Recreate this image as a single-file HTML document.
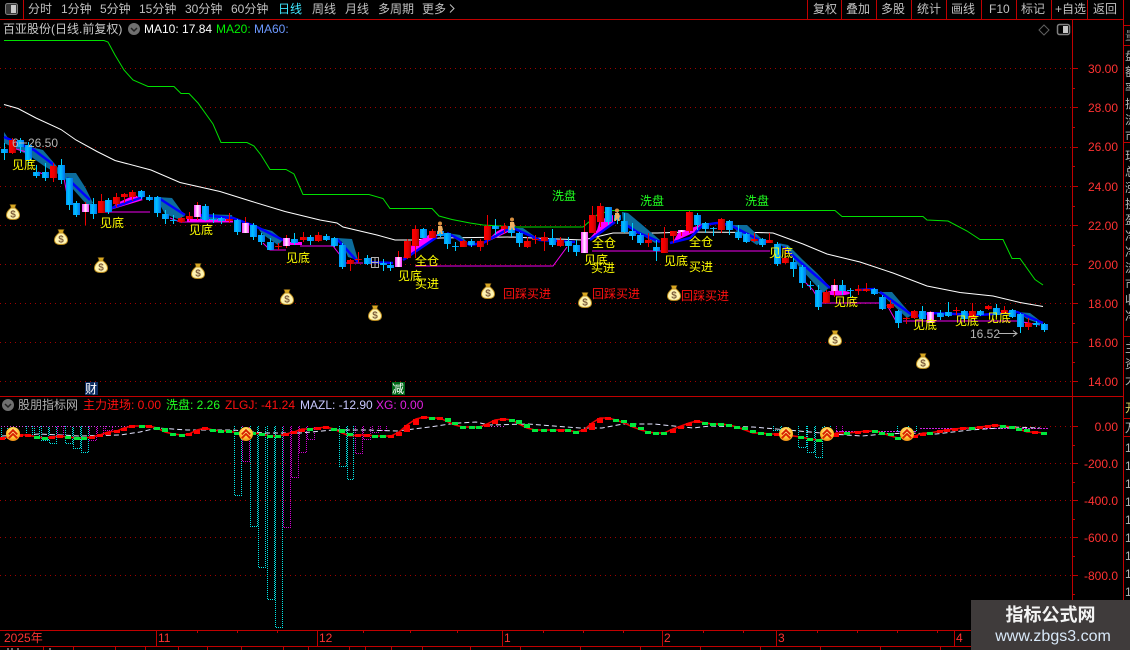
<!DOCTYPE html>
<html><head><meta charset="utf-8"><style>
html,body{margin:0;padding:0;background:#000;width:1130px;height:650px;overflow:hidden}
svg{display:block}
text{font-family:"Liberation Sans","WenQuanYi Zen Hei","Noto Sans CJK SC",sans-serif;font-size:12px}
.m{fill:#c0c0c0}.y{fill:#ffff00}.g{fill:#20ff20}.r{fill:#ff1010}.a{fill:#ff3232}
</style></head><body>
<svg id="s" width="1130" height="650" viewBox="0 0 1130 650" xmlns="http://www.w3.org/2000/svg">
<defs>
<linearGradient id="gb"><stop offset="0" stop-color="#0098ff"/><stop offset=".4" stop-color="#00c0ff"/><stop offset="1" stop-color="#0070f0"/></linearGradient>
<linearGradient id="gr"><stop offset="0" stop-color="#ff0000"/><stop offset=".6" stop-color="#e80000"/><stop offset="1" stop-color="#a80000"/></linearGradient>
<linearGradient id="gp"><stop offset="0" stop-color="#ff30ff"/><stop offset=".5" stop-color="#fff0ff"/><stop offset="1" stop-color="#ff30ff"/></linearGradient>
<radialGradient id="gc" cx=".5" cy=".35" r=".7"><stop offset="0" stop-color="#fff0a0"/><stop offset=".6" stop-color="#ffc030"/><stop offset="1" stop-color="#e88010"/></radialGradient>
<symbol id="bag" viewBox="0 0 14 16" width="14" height="16">
<path d="M4 0.5h6l-1.2 3.5h-3.6z" fill="#d8a820" stroke="#705010" stroke-width=".6"/>
<path d="M5 4h4c2.5 2 4.500 4.500 4.500 7 0 3-2.500 4.500-6.500 4.500S.5 14 .5 11C.5 8.500 2.500 6 5 4z" fill="#fff4b0" stroke="#c09020" stroke-width="1"/>
<text x="7" y="13.500" text-anchor="middle" style="font-size:10px;font-weight:bold;fill:#806040">$</text>
</symbol>
<symbol id="up" viewBox="-8 -8 16 16" width="15" height="15">
<circle r="7.500" fill="url(#gc)"/>
<path d="M-4.500 0.500L0-4L4.500 0.500M-4.500 4.500L0 0L4.500 4.500" fill="none" stroke="#d82000" stroke-width="2"/>
</symbol>
<symbol id="man" viewBox="0 0 10 14" width="10" height="14">
<circle cx="5" cy="2.500" r="2" fill="#d89040"/>
<path d="M3 5h4l1 4-1 1 1 3H6L5 10l-1 3H2l1-4z" fill="#f0b060"/>
</symbol>
</defs>

<!-- grid -->
<g stroke="#a00000" stroke-width="1" stroke-dasharray="1 4" fill="none" shape-rendering="crispEdges">
<path d="M0 68.500H1072M0 107.500H1072M0 147.500H1072M0 186.500H1072M0 225.500H1072M0 264.500H1072M0 303.500H1072M0 342.500H1072M0 381.500H1072M1000 426.500H1072M0 463.500H1072M0 500.500H1072M0 537.500H1072M0 575.500H1072"/>
</g>

<!-- MA lines -->
<polyline fill="none" stroke="#00e000" stroke-width="1" points="4,40.500 104,40.500 108,42 115,55 124,70 133,80 148,86.500 174,86.500 181,93.500 189,93.500 198,103 213,124 221,142.500 247,142.500 254,146 261,155 270,169.500 286,169.500 294,174 303,194.500 369,194.500 383,198.500 390,208.500 432,208.500 439,216 452,219.500 470,223 483,225 517,227 583,227 597,215 610,210.500 835,210.500 842,216.500 923,216.500 927,220 948,221 967,231 980,239.500 1003,239.500 1012,258.500 1020,258.500 1035,279.500 1043,285"/>
<polyline fill="none" stroke="#ffffff" stroke-width="1" points="4,104.500 18,108.500 36,118 61,129.500 76,140 97,151.500 115,160.500 151,170 180,182.500 220,191.500 252,201.500 285,211.500 320,220 337,223 343,227 377,235 395,240 413,240 440,238 513,237 533,238 583,240 613,233 657,233 687,232 757,232.500 773,233 803,244 827,254 860,262 893,273 927,286 960,292.500 993,296 1020,302.500 1043,306.500"/>

<!-- teal ribbons -->
<g fill="#0c6c9c">
<polygon points="4,132 8,138 17,143 31,147 43,150 54,163 60,170 58,174 44,166 30,156 10,146 4,143"/>
<polygon points="63,173 76,173 85,187 90,197 93,203 88,206 72,188 66,181"/>
<polygon points="157,197 172,198 185,216 178,219 165,214 160,205"/>
<polygon points="200,214 232,215 233,220 200,219"/>
<polygon points="257,227 272,231 283,240 278,245 262,234"/>
<polygon points="337,238 352,239 358,260 348,257 342,242"/>
<polygon points="447,233 460,235 470,245 460,242"/>
<polygon points="513,228 523,228 540,240 527,235"/>
<polygon points="622,212 628,213 640,223 660,240 655,243 637,232 623,222"/>
<polygon points="733,225 747,225 763,240 757,245 737,232"/>
<polygon points="778,243 788,245 803,260 817,273 830,287 823,293 800,268 787,250"/>
<polygon points="877,292 892,292 903,305 912,315 907,318 893,305 882,295"/>
<polygon points="1017,312 1030,313 1043,323 1043,325 1027,319"/>
</g>

<!-- magenta fills -->
<g fill="#ff00ff">
<polygon points="110,210 143,200 135,195 117,203"/>
<polygon points="187,219 233,219 233,222 187,222"/>
<polygon points="286,242 302,242 302,245 286,245"/>
<polygon points="403,258 412,245 420,240 432,233 438,235 425,246"/>
<polygon points="485,243 496,232 507,226 513,226 508,232"/>
<polygon points="590,238 603,232 613,223 613,215 600,220 597,230"/>
<polygon points="673,242 693,233 703,223 697,226 678,233"/>
<ellipse cx="838" cy="293" rx="12" ry="2.500"/>
</g>

<!-- magenta lines -->
<g fill="none" stroke="#f000f0" stroke-width="1">
<path d="M16 149L30 153M38 172L48 176M64 178L68 200M103 212H150M170 218L180 222H233M263 243L270 250H286M300 246H333L340 255L345 263H363M415 266H553L567 247M592 251H653H770M800 277L813 290L817 297M822 303H880M887 305L897 323M903 321H1017L1040 325"/>
</g>

<!-- blue lines -->
<g fill="none" stroke="#0000ff" stroke-width="2.500">
<path d="M4 137L34 150L54 165M67 178L90 200M103 211L143 197M157 197L185 215M200 215L233 218L257 227L283 240M337 239L358 262M367 262L393 263M403 260L437 237M447 233L470 245L483 243L510 228M513 228L540 240L575 242M590 240L615 222M622 222L637 232L660 242M670 243L690 238L703 225L717 223L730 225L763 242M783 247L830 288M857 290L875 289M880 292L912 315M917 316L930 313L980 315L1017 312L1043 323"/>
</g>

<!-- candles (filled by script) -->
<g id="cd" shape-rendering="crispEdges"></g>

<!-- hollow box -->
<path d="M371.500 257.500h7v10h-7zM371.500 262.500h7M375 257v10" fill="none" stroke="#b0b0b0" stroke-width="1" shape-rendering="crispEdges"/>

<!-- people -->
<use href="#man" x="435" y="221"/><use href="#man" x="507" y="217"/><use href="#man" x="612" y="208"/>

<!-- bags -->
<use href="#bag" x="6" y="204"/><use href="#bag" x="54" y="229"/><use href="#bag" x="94" y="257"/><use href="#bag" x="191" y="263"/><use href="#bag" x="280" y="289"/><use href="#bag" x="368" y="305"/><use href="#bag" x="481" y="283"/><use href="#bag" x="578" y="292"/><use href="#bag" x="667" y="285"/><use href="#bag" x="828" y="330"/><use href="#bag" x="916" y="353"/>

<!-- chart labels -->
<g class="y">
<text x="12" y="169">见底</text><text x="100" y="227">见底</text><text x="189" y="234">见底</text><text x="286" y="262">见底</text><text x="398" y="280">见底</text><text x="584" y="264">见底</text><text x="664" y="265">见底</text><text x="769" y="257">见底</text><text x="834" y="306">见底</text><text x="913" y="329">见底</text><text x="955" y="325">见底</text><text x="987" y="322">见底</text>
<text x="415" y="288">买进</text><text x="591" y="272">买进</text><text x="689" y="271">买进</text>
<text x="415" y="265">全仓</text><text x="592" y="247">全仓</text><text x="689" y="246">全仓</text>
</g>
<g class="g"><text x="552" y="200">洗盘</text><text x="640" y="205">洗盘</text><text x="745" y="205">洗盘</text></g>
<g class="r"><text x="503" y="298">回踩买进</text><text x="592" y="298">回踩买进</text><text x="681" y="300">回踩买进</text></g>
<text x="12" y="147" fill="#b4b4b4">6</text><path d="M19 143h8" stroke="#b4b4b4"/><text x="28" y="147" fill="#b4b4b4">26.50</text>
<text x="970" y="338" fill="#b4b4b4">16.52</text><path d="M999 333.500h18M1013 330.500l4 3-4 3" fill="none" stroke="#b4b4b4"/>

<rect x="85" y="382" width="13" height="13" fill="#0c2c60"/><text x="85" y="393" fill="#fff">财</text>
<rect x="392" y="382" width="13" height="13" fill="#006818"/><text x="392" y="393" fill="#fff">减</text>

<!-- sub pane bars -->
<g id="bars" fill="none" stroke-width="1" stroke-dasharray="1 1" shape-rendering="crispEdges"></g>
<path d="M1 426.500H130M476 426.500H506" stroke="#d040e0" stroke-dasharray="1 2" fill="none"/>
<path d="M836 431.500H916M920 428.500H1048" stroke="#d020e0" stroke-dasharray="2 1" fill="none"/>

<!-- MAZL -->
<polyline fill="none" stroke="#e4e4ff" stroke-width="1" stroke-dasharray="5 3" points="2,436 40,434 80,436 120,435 140,432 157,428 187,430 233,430 263,433 300,433 333,430 367,430 397,431 430,427 450,424 459,423 476,422 489,425 528,424 554,426 580,428 602,428 623,424 654,424 693,428 710,426 753,427 788,430 832,434 862,436 884,434 910,433 936,434 970,430 1014,427 1040,428"/>
<g id="zl"></g>

<use href="#up" x="5.500" y="426.500"/><use href="#up" x="238.500" y="426.500"/><use href="#up" x="778.500" y="426.500"/><use href="#up" x="819.500" y="426.500"/><use href="#up" x="899.500" y="426.500"/>

<!-- legends -->
<text x="3" y="33" fill="#c8c8c8">百亚股份(日线.前复权)</text>
<circle cx="134" cy="29" r="6" fill="#707070"/><path d="M131 28l3 3 3-3" stroke="#222" stroke-width="1.500" fill="none"/>
<text x="144" y="33" fill="#fff">MA10: 17.84</text><text x="216" y="33" fill="#00f000">MA20:</text><text x="254" y="33" fill="#6c98ff">MA60:</text>
<path d="M1044 25l5 5-5 5-5-5z" fill="none" stroke="#606060"/>
<rect x="1057.500" y="24.500" width="12" height="10" rx="2" fill="none" stroke="#808080" stroke-width="1.500"/><rect x="1063" y="26" width="5" height="7" fill="#c8c8c8"/>

<circle cx="8" cy="405" r="6" fill="#707070"/><path d="M5 404l3 3 3-3" stroke="#222" stroke-width="1.500" fill="none"/>
<text x="18" y="409" fill="#b0b0b0">股朋指标网</text>
<text x="83" y="409" fill="#ff1010">主力进场: 0.00</text><text x="166" y="409" class="g">洗盘: 2.26</text><text x="225" y="409" fill="#ff1010">ZLGJ: -41.24</text><text x="300" y="409" fill="#c8c8ff">MAZL: -12.90</text><text x="376" y="409" fill="#e020e0">XG: 0.00</text>

<!-- frame -->
<g stroke="#c00000" stroke-width="1" fill="none" shape-rendering="crispEdges">
<path d="M0 19.500H1124M23.500 0V19M807.500 0V19M841.500 0V19M876.500 0V19M911.500 0V19M946.500 0V19M981.500 0V19M1016.500 0V19M1051.500 0V19M1087.500 0V19M1123.500 0V650"/>
<path d="M0 396.500H1124M0 630.500H1073M0 646.500H971M1072.500 19V646M1124 25.500H1130M1124 45.500H1130M1124 142.500H1130M1124 336.500H1130M1124 418.500H1130M1124 436.500H1130"/>
<path d="M156.500 630V646M317.500 630V646M502.500 630V646M662.500 630V646M776.500 630V646M954.500 630V646"/>
<path d="M197.500 630V633M237.500 630V633M277.500 630V633M363.500 630V633M410.500 630V633M457.500 630V633M543.500 630V633M583.500 630V633M623.500 630V633M703.500 630V633M743.500 630V633M817.500 630V633M857.500 630V633M897.500 630V633M937.500 630V633"/>
<path d="M43.500 646V650M73.500 646V650M115.500 646V650M145.500 646V650M178.500 646V650M207.500 646V650M241.500 646V650M283.500 646V650M308.500 646V650M349.500 646V650M365.500 646V650M391.500 646V650M422.500 646V650M470.500 646V650M520.500 646V650M580.500 646V650M640.500 646V650M700.500 646V650M760.500 646V650M820.500 646V650M880.500 646V650M940.500 646V650"/>
<path d="M1073 68.500H1078M1073 107.500H1078M1073 147.500H1078M1073 186.500H1078M1073 225.500H1078M1073 264.500H1078M1073 303.500H1078M1073 342.500H1078M1073 381.500H1078M1073 426.500H1078M1073 463.500H1078M1073 500.500H1078M1073 537.500H1078M1073 575.500H1078"/>
<path d="M1073 88.500H1075M1073 127.500H1075M1073 166.500H1075M1073 206.500H1075M1073 245.500H1075M1073 284.500H1075M1073 323.500H1075M1073 362.500H1075M1073 445.500H1075M1073 482.500H1075M1073 519.500H1075M1073 556.500H1075M1073 594.500H1075"/>
</g>

<!-- top bar -->
<rect x="5.500" y="3.500" width="12" height="11" rx="2" fill="#383838" stroke="#808080"/><rect x="11" y="5" width="5" height="8" fill="#c8c8c8"/>
<g class="m">
<text x="28" y="13">分时</text><text x="61" y="13">1分钟</text><text x="100" y="13">5分钟</text><text x="139" y="13">15分钟</text><text x="185" y="13">30分钟</text><text x="231" y="13">60分钟</text>
<text x="278" y="13" style="fill:#40e8ff">日线</text><text x="312" y="13">周线</text><text x="345" y="13">月线</text><text x="378" y="13">多周期</text><text x="422" y="13">更多</text>
<text x="813" y="13">复权</text><text x="846" y="13">叠加</text><text x="881" y="13">多股</text><text x="917" y="13">统计</text><text x="951" y="13">画线</text><text x="989" y="13">F10</text><text x="1021" y="13">标记</text><text x="1055" y="13">+自选</text><text x="1093" y="13">返回</text>
</g>
<path d="M450 4.500l4 4-4 4" fill="none" stroke="#c0c0c0"/>

<!-- axis labels -->
<g class="a" text-anchor="end">
<text x="1118" y="73">30.00</text><text x="1118" y="112">28.00</text><text x="1118" y="151">26.00</text><text x="1118" y="191">24.00</text><text x="1118" y="230">22.00</text><text x="1118" y="269">20.00</text><text x="1118" y="308">18.00</text><text x="1118" y="347">16.00</text><text x="1118" y="386">14.00</text>
<text x="1118" y="431">0.00</text><text x="1118" y="468">-200.0</text><text x="1118" y="505">-400.0</text><text x="1118" y="542">-600.0</text><text x="1118" y="580">-800.0</text>
</g>
<g class="a">
<text x="4" y="642">2025年</text><text x="158" y="642">11</text><text x="319" y="642">12</text><text x="504" y="642">1</text><text x="664" y="642">2</text><text x="778" y="642">3</text><text x="956" y="642">4</text>
</g>
<path d="M8 648v2M12 648v2M18 648v2M50 648v2" stroke="#d0d0d0"/>

<!-- right clipped column -->
<g fill="#b4b4b4" style="font-size:14px">
<text x="1125" y="40" fill="#808080">量</text><text x="1125" y="60">盘</text><text x="1125" y="76">额</text><text x="1125" y="92">率</text><text x="1125" y="108">振</text><text x="1125" y="124">流</text><text x="1125" y="140">市</text><text x="1125" y="160">现</text><text x="1125" y="176">总</text><text x="1125" y="192">涨</text><text x="1125" y="208">换</text><text x="1125" y="224">盈</text><text x="1125" y="240">净</text><text x="1125" y="256">净</text><text x="1125" y="272">流</text><text x="1125" y="288">市</text><text x="1125" y="304">收</text><text x="1125" y="320">净</text><text x="1125" y="352">主</text><text x="1125" y="368">资</text><text x="1125" y="384">大</text><text x="1125" y="412" fill="#d8d060">开</text><text x="1125" y="432">万</text><text x="1125" y="452">1</text><text x="1125" y="470">1</text><text x="1125" y="488">1</text><text x="1125" y="506">1</text><text x="1125" y="524">1</text><text x="1125" y="542">1</text><text x="1125" y="560">1</text><text x="1125" y="578">1</text><text x="1125" y="596">1</text>
</g>

<!-- watermark -->
<rect x="971" y="600" width="159" height="50" fill="#3f3b3b"/>
<text x="1050.500" y="621" text-anchor="middle" style="font-size:18px;font-weight:bold;fill:#f4f4f4">指标公式网</text>
<text x="1053" y="641" text-anchor="middle" style="font-size:16px;fill:#d8e8f8">www.zbgs3.com</text>
</svg>
<script>
var C=[[4,143,149,153,160,'b'],[12,138,140,153,154,'r'],[20,138,140,147,153,'b'],[28,142,145,160,165,'b'],[36,165,172,176,178,'b'],[45,163,172,178,181,'b'],[53,163,166,178,182,'r'],[61,159,165,180,184,'b'],[69,178,178,205,210,'b'],[76,201,203,215,217,'b'],[85,202,204,212,225,'p'],[93,198,204,214,219,'b'],[101,194,201,213,213,'r'],[108,198,200,212,214,'b'],[116,193,197,204,207,'r'],[124,193,194,197,203,'r'],[132,190,192,197,201,'r'],[141,190,191,197,199,'b'],[149,195,197,200,201,'b'],[157,196,197,213,217,'b'],[165,210,214,219,224,'b'],[173,215,220,221,224,'b'],[181,217,218,222,223,'r'],[189,212,216,219,221,'r'],[197,202,205,217,220,'p'],[205,204,206,220,221,'b'],[213,213,219,220,223,'b'],[221,217,218,221,224,'b'],[229,213,219,221,223,'r'],[237,219,220,232,235,'b'],[245,217,223,233,233,'p'],[253,223,225,237,240,'b'],[261,233,235,242,245,'b'],[270,238,242,250,250,'b'],[278,243,246,247,250,'r'],[286,235,238,246,248,'p'],[294,233,239,243,245,'b'],[303,232,237,240,242,'r'],[310,235,237,241,245,'b'],[318,232,235,241,242,'r'],[326,234,236,240,241,'b'],[334,237,238,246,247,'b'],[342,243,245,267,269,'b'],[350,259,260,264,271,'r'],[358,252,259,260,263,'r'],[367,255,258,264,265,'b'],[383,259,263,265,271,'b'],[390,262,265,268,271,'b'],[398,251,257,267,267,'p'],[407,239,241,258,259,'r'],[415,225,229,246,258,'r'],[423,228,229,238,238,'b'],[432,229,231,238,238,'r'],[440,229,231,236,237,'b'],[447,233,233,244,249,'b'],[455,242,246,247,251,'b'],[463,240,241,247,247,'r'],[471,239,241,245,247,'b'],[480,239,241,247,251,'r'],[487,215,226,240,245,'r'],[495,219,226,229,235,'b'],[504,223,226,229,233,'r'],[511,223,226,233,237,'b'],[519,232,233,243,247,'b'],[527,237,241,247,248,'r'],[535,235,239,240,244,'r'],[544,232,237,241,251,'r'],[552,229,238,245,247,'b'],[560,237,240,246,247,'r'],[568,237,241,246,252,'b'],[576,240,245,252,256,'b'],[584,220,232,253,253,'p'],[592,206,215,233,233,'r'],[600,203,206,222,227,'r'],[608,207,207,222,225,'b'],[617,212,215,220,224,'b'],[624,213,221,232,233,'b'],[632,223,231,236,240,'b'],[640,233,235,243,245,'b'],[648,233,240,243,247,'r'],[656,240,247,251,261,'b'],[664,227,238,253,253,'r'],[673,231,231,236,243,'r'],[681,230,230,232,236,'p'],[689,211,212,231,233,'r'],[697,213,215,225,230,'b'],[705,222,223,229,233,'b'],[713,227,228,229,236,'b'],[721,218,219,230,233,'r'],[729,220,221,230,235,'b'],[738,225,232,238,240,'b'],[746,233,234,242,243,'b'],[754,233,239,241,242,'r'],[762,238,239,245,247,'b'],[769,233,240,243,243,'r'],[777,242,244,264,266,'b'],[785,247,258,263,264,'r'],[793,258,262,269,277,'b'],[802,265,267,283,288,'b'],[810,281,285,286,290,'b'],[818,285,290,307,310,'b'],[826,290,292,303,303,'r'],[834,279,285,291,297,'p'],[842,280,285,291,295,'b'],[850,288,290,291,297,'b'],[858,285,289,291,295,'r'],[866,283,289,291,292,'r'],[874,288,289,294,295,'b'],[882,295,297,309,310,'b'],[890,300,304,308,309,'r'],[898,310,311,323,328,'b'],[906,317,318,319,324,'r'],[914,310,311,318,319,'r'],[922,306,311,319,320,'b'],[930,311,312,323,323,'p'],[940,310,313,317,320,'b'],[948,302,312,316,317,'b'],[956,307,310,311,315,'r'],[964,310,311,319,320,'b'],[972,303,311,318,319,'r'],[980,310,311,315,316,'b'],[988,305,306,309,310,'r'],[996,304,308,315,317,'b'],[1004,306,310,313,314,'r'],[1012,309,310,317,318,'b'],[1020,313,314,327,333,'b'],[1028,318,323,327,330,'r'],[1036,321,323,325,327,'b'],[1044,323,324,330,332,'b']];
var h='';
C.forEach(function(c){var w=c[5]=='b'?'#00d0ff':'#f00000';
h+='<rect x="'+c[0]+'" y="'+c[1]+'" width="1" height="'+(c[4]-c[1])+'" fill="'+w+'"/>';
h+='<rect x="'+(c[0]-3)+'" y="'+c[2]+'" width="7" height="'+(c[3]-c[2])+'" fill="url(#g'+c[5]+')"/>';});
document.getElementById('cd').innerHTML=h;

var B=[[1,7,438,'c'],[26,32,435,'c'],[34,39,438,'c'],[41,48,440,'c'],[49,56,443,'c'],[57,63,437,'m'],[65,72,443,'c'],[73,80,448,'c'],[81,88,452,'c'],[89,96,440,'m'],[97,103,435,'m'],[105,112,430,'m'],[234,241,495,'c'],[242,249,461,'m'],[250,257,526,'c'],[258,265,567,'c'],[267,274,599,'c'],[275,282,627,'c'],[283,290,527,'m'],[291,298,477,'m'],[299,306,452,'m'],[307,314,439,'m'],[339,346,466,'c'],[347,353,479,'c'],[355,362,453,'m'],[363,370,439,'m'],[372,378,432,'m'],[380,386,430,'m'],[773,780,430,'c'],[781,788,432,'c'],[798,806,447,'c'],[807,814,452,'c'],[815,822,457,'c'],[824,830,436,'c'],[836,842,431,'m'],[897,906,431,'c'],[908,916,431,'c']];
h='';B.forEach(function(b){var s=b[3]=='c'?'#00e8e8':'#d000d0';
h+='<path d="M'+(b[0]+.5)+' 426V'+(b[2]+.5)+'H'+(b[1]+.5)+'V426" stroke="'+s+'"/>';});
document.getElementById('bars').innerHTML=h;

var P=[[2,438],[10,437],[20,435],[28,435],[37,437],[45,438],[52,437],[60,436],[68,437],[77,438],[84,438],[92,437],[100,435],[108,432],[117,431],[124,428],[132,426],[142,426],[149,426],[157,428],[165,432],[173,434],[182,435],[189,434],[197,430],[205,428],[213,430],[221,431],[229,431],[237,433],[245,433],[253,433],[262,434],[270,436],[278,436],[286,434],[294,432],[302,429],[310,429],[318,428],[326,427],[334,429],[342,433],[350,436],[358,435],[367,435],[375,436],[383,436],[391,436],[399,432],[407,425],[416,419],[424,417],[432,418],[440,418],[448,422],[455,425],[463,427],[472,427],[479,427],[487,424],[495,420],[503,419],[512,420],[519,424],[527,428],[535,430],[544,430],[553,430],[561,430],[568,430],[576,432],[584,430],[592,423],[600,418],[608,418],[616,420],[624,423],[633,427],[641,430],[648,432],[656,433],[664,433],[673,429],[681,426],[689,423],[697,421],[705,423],[713,424],[721,424],[729,425],[737,427],[745,430],[753,433],[761,433],[769,434],[777,434],[786,435],[801,437],[810,439],[819,440],[827,437],[836,433],[847,433],[858,432],[866,431],[875,431],[882,433],[891,436],[898,438],[907,437],[915,436],[923,433],[930,433],[940,431],[947,430],[955,429],[963,428],[972,428],[980,427],[988,426],[995,425],[1003,426],[1012,427],[1019,429],[1027,432],[1035,432],[1044,433]];
h='<polyline fill="none" stroke="#f00000" stroke-width="1.500" points="'+P.map(function(p){return p.join(',')}).join(' ')+'"/>';
P.forEach(function(p,i){var q=i?P[i-1][1]:p[1],d=p[1]-q,a=Math.abs(d),r=d<0||(d==0&&i%3==0),t=Math.min(p[1],q),ht=a<3?3:a;
if(a<3)t=p[1]-1;
h+='<rect x="'+(p[0]-3)+'" y="'+t+'" width="6" height="'+ht+'" fill="'+(r?'#ff0000':'#00e83c')+'" shape-rendering="crispEdges"/>';});
document.getElementById('zl').innerHTML=h;
</script>
</body></html>
